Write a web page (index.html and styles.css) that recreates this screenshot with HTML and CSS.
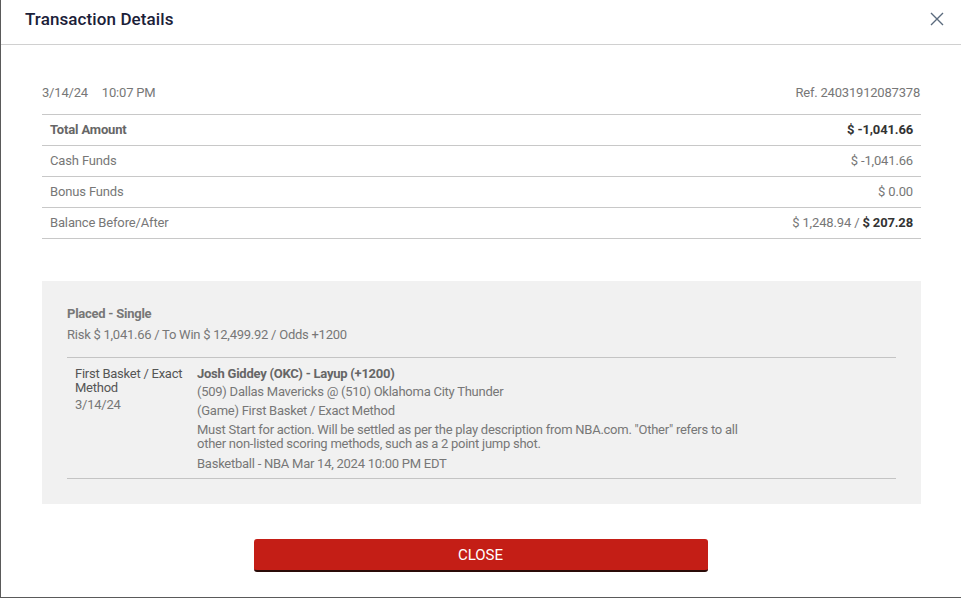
FILE: index.html
```html
<!DOCTYPE html>
<html>
<head>
<meta charset="utf-8">
<link rel="stylesheet" href="styles.css">
</head>
<body>
<div class="backdrop">
  <div class="modal">
    <div class="modal-header">
      <h1 class="title">Transaction Details</h1>
      <button class="close-x" aria-label="Close">
        <svg width="14" height="14" viewBox="0 0 14 14"><path d="M1 1L13 13M13 1L1 13" stroke="#5b6b7d" stroke-width="1.4" fill="none"/></svg>
      </button>
    </div>
    <div class="modal-body">
      <div class="meta">
        <div class="meta-date"><span>3/14/24</span><span class="time">10:07 PM</span></div>
        <div class="meta-ref">Ref. 24031912087378</div>
      </div>
      <div class="amounts">
        <div class="row strong"><span>Total Amount</span><span>$ -1,041.66</span></div>
        <div class="row"><span>Cash Funds</span><span>$ -1,041.66</span></div>
        <div class="row"><span>Bonus Funds</span><span>$ 0.00</span></div>
        <div class="row"><span>Balance Before/After</span><span>$ 1,248.94 / <b>$ 207.28</b></span></div>
      </div>
      <div class="bet">
        <div class="bet-type">Placed - Single</div>
        <div class="bet-summary">Risk $ 1,041.66 / To Win $ 12,499.92 / Odds +1200</div>
        <div class="leg">
          <div class="leg-left">
            <div class="market">First Basket / Exact Method</div>
            <div class="leg-date">3/14/24</div>
          </div>
          <div class="leg-right">
            <div class="selection">Josh Giddey (OKC) - Layup (+1200)</div>
            <div class="line">(509) Dallas Mavericks @ (510) Oklahoma City Thunder</div>
            <div class="line">(Game) First Basket / Exact Method</div>
            <div class="line rules">Must Start for action. Will be settled as per the play description from NBA.com. "Other" refers to all other non-listed scoring methods, such as a 2 point jump shot.</div>
            <div class="line">Basketball - NBA Mar 14, 2024 10:00 PM EDT</div>
          </div>
        </div>
      </div>
      <div class="actions">
        <button class="close-btn">CLOSE</button>
      </div>
    </div>
  </div>
</div>
</body>
</html>
```

FILE: styles.css
```css
* { box-sizing: border-box; }
html, body { margin: 0; padding: 0; }
body {
  width: 961px;
  height: 598px;
  overflow: hidden;
  background: #5a5a5a;
  font-family: Roboto, "Liberation Sans", sans-serif;
}
.backdrop {
  padding: 0 0 1px 1px;
  height: 598px;
}
.modal {
  background: #fff;
  height: 597px;
  display: flex;
  flex-direction: column;
}
.modal-header {
  height: 45px;
  border-bottom: 1px solid #d0d0d0;
  display: flex;
  align-items: center;
  justify-content: space-between;
  padding: 0 17px 0 24px;
}
.title {
  margin: 0;
  font-size: 17px;
  font-weight: 500;
  color: #1b2139;
  letter-spacing: 0.1px;
  position: relative;
  top: -3px;
}
.close-x {
  border: 0;
  background: none;
  padding: 0;
  width: 14px;
  height: 14px;
  display: flex;
  position: relative;
  top: -3px;
}
.modal-body {
  padding: 0 40px 0 41px;
  display: flex;
  flex-direction: column;
}
.meta {
  display: flex;
  justify-content: space-between;
  color: #777;
  font-size: 13px;
  padding-top: 40px;
  padding-right: 1px;
  height: 70px;
  border-bottom: 1px solid #c8c8c8;
  letter-spacing: -0.2px;
}
.meta .time { margin-left: 14px; }
.amounts { margin-bottom: 42px; }
.row {
  display: flex;
  justify-content: space-between;
  height: 31px;
  align-items: center;
  padding: 0 8px 1px;
  border-bottom: 1px solid #c8c8c8;
  font-size: 13px;
  color: #777;
  letter-spacing: -0.15px;
}
.row.strong { font-weight: 700; color: #666; }
.row.strong span:last-child { color: #333; }
.row b { color: #333; font-weight: 700; }
.bet {
  background: #f1f1f1;
  height: 223px;
  padding: 25px 25px 0 25px;
  color: #777;
  font-size: 13px;
  letter-spacing: -0.25px;
}
.bet-type { font-weight: 700; color: #777; line-height: 16px; }
.bet-summary { margin-top: 5px; line-height: 16px; }
.leg {
  margin-top: 14px;
  border-top: 1px solid #c4c4c4;
  border-bottom: 1px solid #c4c4c4;
  display: flex;
  padding: 9px 8px 7px;
}
.leg-left { width: 122px; flex: none; }
.market { width: 116px; line-height: 14px; color: #555; }
.leg-date { margin-top: 3px; line-height: 14px; }
.leg-right { width: 560px; }
.selection { font-weight: 700; color: #666; line-height: 14px; }
.line { line-height: 14px; margin-top: 4px; }
.line + .line { margin-top: 5px; }
.rules + .line { margin-top: 6px; }
.actions {
  display: flex;
  justify-content: center;
  padding-top: 35px;
  padding-right: 2px;
}
.close-btn {
  width: 454px;
  height: 33px;
  background: #c41e16;
  border: 0;
  border-bottom: 2px solid #2a0b08;
  border-radius: 3px;
  color: #fff;
  font-family: Roboto, "Liberation Sans", sans-serif;
  font-size: 15px;
  padding: 0;
}
```
